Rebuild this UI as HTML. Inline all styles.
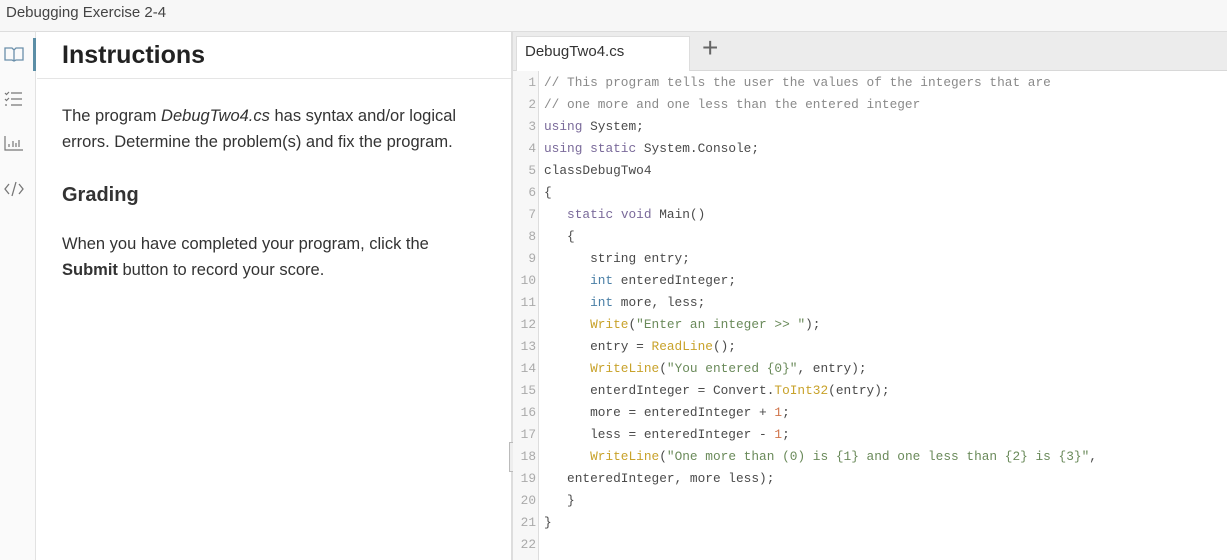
<!DOCTYPE html>
<html><head><meta charset="utf-8"><style>
*{margin:0;padding:0;box-sizing:border-box}
body{width:1227px;height:560px;overflow:hidden;background:#fff;font-family:"Liberation Sans",sans-serif;color:#333;position:relative}
.top{position:absolute;left:0;top:0;width:1227px;height:32px;background:#f7f7f7;border-bottom:1px solid #ddd;font-size:15px;line-height:26px;padding-left:6px;color:#444}
.side{position:absolute;left:0;top:32px;width:36px;height:528px;background:#fafafa;border-right:1px solid #e2e2e2}
.act{position:absolute;left:33px;top:38px;width:3px;height:33px;background:#5b8ea6}
.side svg{position:absolute;left:3px}
.inst{position:absolute;left:37px;top:32px;width:474px;height:528px}
.inst .hd{height:47px;border-bottom:1px solid #e5e5e5;padding-left:25px;font-size:25px;font-weight:bold;line-height:46px;color:#222}
.inst p{position:absolute;left:25px;font-size:16.5px;line-height:26px;color:#333;width:450px;white-space:nowrap}
.inst h2{position:absolute;left:25px;top:152px;font-size:20px;font-weight:bold;color:#333}
.div{position:absolute;left:511px;top:32px;width:2px;height:528px;background:#ddd}
.grip{position:absolute;left:509px;top:442px;width:6px;height:30px;border:1px solid #bbb;background:#eee}
.tabs{position:absolute;left:513px;top:32px;width:714px;height:39px;background:#ececec;border-bottom:1px solid #d8d8d8}
.tab{position:absolute;left:3px;top:4px;width:174px;height:35px;background:#fff;border:1px solid #ddd;border-bottom:none;font-size:15px;line-height:30px;padding-left:8px;color:#333}
.plus{position:absolute;left:189px;top:0px;font-size:28px;color:#666;font-weight:300}
.gut{position:absolute;left:513px;top:71px;width:26px;height:489px;background:#f7f7f7;border-right:1px solid #ddd}
.code{position:absolute;left:513px;top:72px;font-family:"Liberation Mono",monospace;font-size:12.8px;line-height:22px;color:#4a4a4a}
.ln{position:absolute;left:0;width:23px;text-align:right;color:#aaa}
.l{position:absolute;left:31px;white-space:pre}
.c{color:#8a8a8a}.k{color:#7a6a9a}.t{color:#4a7fa6}.f{color:#c8a22a}.s{color:#6a8a5a}.n{color:#d0744a}
</style></head><body>
<div class="top">Debugging Exercise 2-4</div>
<div class="side">
<svg style="top:14px" width="22" height="16" viewBox="0 0 22 16"><path d="M2 2h7l2 2 2-2h7v12h-7l-2 1-2-1H2z M11 4v11" fill="none" stroke="#6a8faa" stroke-width="1.3"/></svg>
<svg style="top:58px" width="22" height="18" viewBox="0 0 22 18"><path d="M2 3l1.5 1.5L6 2M2 9l1.5 1.5L6 8M2 15h2M8 3h11M8 9h11M8 15h11" fill="none" stroke="#777" stroke-width="1.2"/></svg>
<svg style="top:102px" width="22" height="18" viewBox="0 0 22 18"><path d="M2 2v14h18M6 13v-3M10 13v-6M13 13v-4M16 13v-7" fill="none" stroke="#777" stroke-width="1.2"/></svg>
<svg style="top:148px" width="22" height="18" viewBox="0 0 22 18"><path d="M6 4l-4 5 4 5M16 4l4 5-4 5M13 2l-4 14" fill="none" stroke="#777" stroke-width="1.3"/></svg>
</div>
<div class="act"></div>
<div class="inst">
<div class="hd">Instructions</div>
<p style="top:71px">The program <i>DebugTwo4.cs</i> has syntax and/or logical<br>errors. Determine the problem(s) and fix the program.</p>
<h2>Grading</h2>
<p style="top:199px">When you have completed your program, click the<br><b>Submit</b> button to record your score.</p>
</div>
<div class="div"></div><div class="grip"></div>
<div class="tabs"><div class="tab">DebugTwo4.cs</div><div class="plus">+</div></div>
<div class="gut"></div>
<div class="code">
<div class="ln" style="top:0">1</div><div class="l" style="top:0"><span class="c">// This program tells the user the values of the integers that are</span></div>
<div class="ln" style="top:22px">2</div><div class="l" style="top:22px"><span class="c">// one more and one less than the entered integer</span></div>
<div class="ln" style="top:44px">3</div><div class="l" style="top:44px"><span class="k">using</span> System;</div>
<div class="ln" style="top:66px">4</div><div class="l" style="top:66px"><span class="k">using</span> <span class="k">static</span> System.Console;</div>
<div class="ln" style="top:88px">5</div><div class="l" style="top:88px">classDebugTwo4</div>
<div class="ln" style="top:110px">6</div><div class="l" style="top:110px">{</div>
<div class="ln" style="top:132px">7</div><div class="l" style="top:132px">   <span class="k">static</span> <span class="k">void</span> Main()</div>
<div class="ln" style="top:154px">8</div><div class="l" style="top:154px">   {</div>
<div class="ln" style="top:176px">9</div><div class="l" style="top:176px">      string entry;</div>
<div class="ln" style="top:198px">10</div><div class="l" style="top:198px">      <span class="t">int</span> enteredInteger;</div>
<div class="ln" style="top:220px">11</div><div class="l" style="top:220px">      <span class="t">int</span> more, less;</div>
<div class="ln" style="top:242px">12</div><div class="l" style="top:242px">      <span class="f">Write</span>(<span class="s">"Enter an integer &gt;&gt; "</span>);</div>
<div class="ln" style="top:264px">13</div><div class="l" style="top:264px">      entry = <span class="f">ReadLine</span>();</div>
<div class="ln" style="top:286px">14</div><div class="l" style="top:286px">      <span class="f">WriteLine</span>(<span class="s">"You entered {0}"</span>, entry);</div>
<div class="ln" style="top:308px">15</div><div class="l" style="top:308px">      enterdInteger = Convert.<span class="f">ToInt32</span>(entry);</div>
<div class="ln" style="top:330px">16</div><div class="l" style="top:330px">      more = enteredInteger + <span class="n">1</span>;</div>
<div class="ln" style="top:352px">17</div><div class="l" style="top:352px">      less = enteredInteger - <span class="n">1</span>;</div>
<div class="ln" style="top:374px">18</div><div class="l" style="top:374px">      <span class="f">WriteLine</span>(<span class="s">"One more than (0) is {1} and one less than {2} is {3}"</span>,</div>
<div class="ln" style="top:396px">19</div><div class="l" style="top:396px">   enteredInteger, more less);</div>
<div class="ln" style="top:418px">20</div><div class="l" style="top:418px">   }</div>
<div class="ln" style="top:440px">21</div><div class="l" style="top:440px">}</div>
<div class="ln" style="top:462px">22</div>
</div>
</body></html>
